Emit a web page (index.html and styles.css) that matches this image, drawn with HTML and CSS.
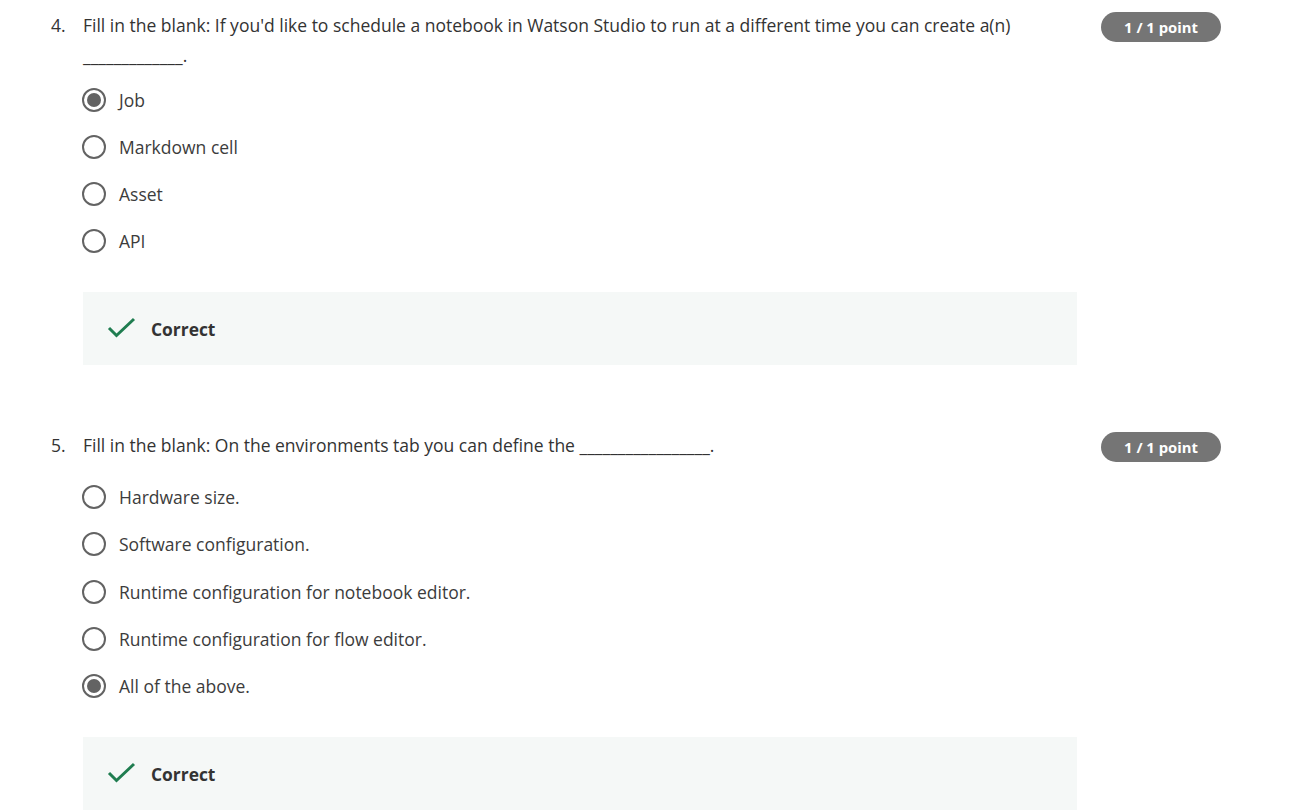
FILE: index.html
```html
<!DOCTYPE html>
<html>
<head>
<meta charset="utf-8">
<link rel="stylesheet" href="styles.css">
</head>
<body>
<div class="page">
  <div class="question q4">
    <div class="head">
      <div class="num">4.</div>
      <div class="prompt">Fill in the blank: If you'd like to schedule a notebook in Watson Studio to run at a different time you can create a(n) _____________.</div>
      <div class="badge">1 / 1 point</div>
    </div>
    <div class="options">
      <div class="option"><span class="radio checked"></span><span class="label">Job</span></div>
      <div class="option"><span class="radio"></span><span class="label">Markdown cell</span></div>
      <div class="option"><span class="radio"></span><span class="label">Asset</span></div>
      <div class="option"><span class="radio"></span><span class="label">API</span></div>
    </div>
    <div class="feedback">
      <svg class="check" width="30" height="24" viewBox="0 0 30 24"><path d="M2 12 L9.5 19.5 L27 3" fill="none" stroke="#1f7d50" stroke-width="3"/></svg>
      <span class="fb-text">Correct</span>
    </div>
  </div>

  <div class="question q5">
    <div class="head">
      <div class="num">5.</div>
      <div class="prompt">Fill in the blank: On the environments tab you can define the _________________.</div>
      <div class="badge">1 / 1 point</div>
    </div>
    <div class="options">
      <div class="option"><span class="radio"></span><span class="label">Hardware size.</span></div>
      <div class="option"><span class="radio"></span><span class="label">Software configuration.</span></div>
      <div class="option"><span class="radio"></span><span class="label">Runtime configuration for notebook editor.</span></div>
      <div class="option"><span class="radio"></span><span class="label">Runtime configuration for flow editor.</span></div>
      <div class="option"><span class="radio checked"></span><span class="label">All of the above.</span></div>
    </div>
    <div class="feedback">
      <svg class="check" width="30" height="24" viewBox="0 0 30 24"><path d="M2 12 L9.5 19.5 L27 3" fill="none" stroke="#1f7d50" stroke-width="3"/></svg>
      <span class="fb-text">Correct</span>
    </div>
  </div>
</div>
</body>
</html>
```

FILE: styles.css
```css
html, body {
  margin: 0;
  padding: 0;
  background: #ffffff;
}
body {
  font-family: "Open Sans", "Liberation Sans", sans-serif;
  color: #333333;
  font-size: 17.5px;
}
.page {
  padding: 10px 0 0 51px;
}
.question.q5 {
  margin-top: 65px;
}
.head {
  display: flex;
  align-items: flex-start;
  line-height: 30px;
}
.num {
  width: 32px;
  flex: none;
}
.prompt {
  width: 945px;
  flex: none;
}
.badge {
  margin-left: 73px;
  margin-top: 2px;
  width: 120px;
  height: 30px;
  border-radius: 15px;
  background: #757575;
  color: #ffffff;
  font-weight: 700;
  font-size: 14.8px;
  line-height: 30px;
  text-align: center;
  flex: none;
}
.options {
  margin-left: 31px;
  margin-top: 18px;
  display: flex;
  flex-direction: column;
  gap: 23px;
}
.q5 .options {
  margin-top: 23px;
  gap: 23.25px;
}
.option {
  display: flex;
  align-items: center;
  height: 24px;
}
.radio {
  width: 24px;
  height: 24px;
  box-sizing: border-box;
  border: 2px solid #636363;
  border-radius: 50%;
  flex: none;
  position: relative;
}
.radio.checked::after {
  content: "";
  position: absolute;
  left: 3px;
  top: 3px;
  width: 14px;
  height: 14px;
  border-radius: 50%;
  background: #636363;
}
.label {
  margin-left: 13px;
  line-height: 24px;
  color: #3c3c3c;
}
.feedback {
  margin-left: 32px;
  margin-top: 39px;
  width: 994px;
  height: 73px;
  background: #f5f8f7;
  display: flex;
  align-items: center;
  padding-left: 24px;
  box-sizing: border-box;
}
.check {
  flex: none;
  margin-top: -2px;
}
.fb-text {
  margin-left: 14px;
  font-weight: 700;
  font-size: 17.4px;
  color: #333333;
}
```
